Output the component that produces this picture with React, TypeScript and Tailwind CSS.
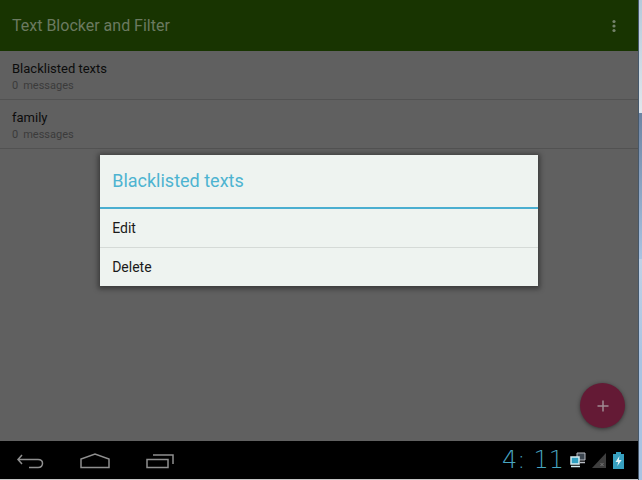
import { useState } from 'react';

interface BlockList {
  id: number;
  name: string;
  count: number;
}

const LISTS: BlockList[] = [
  { id: 1, name: 'Blacklisted texts', count: 0 },
  { id: 2, name: 'family', count: 0 },
];

const AppBar = () => (
  <header className="flex h-[51px] items-center justify-between bg-[#183401] pl-3 pr-4">
    <h1 className="text-base leading-6 text-[#6b7a60]">Text Blocker and Filter</h1>
    <button type="button" aria-label="More options" className="flex h-6 w-4 items-center justify-center">
      <svg viewBox="0 0 4 14" className="h-[14px] w-1 fill-[#74826b]">
        <circle cx="2" cy="2.5" r="1.6" />
        <circle cx="2" cy="7" r="1.6" />
        <circle cx="2" cy="11.5" r="1.6" />
      </svg>
    </button>
  </header>
);

const ListRow = ({ list }: { list: BlockList }) => (
  <li className="border-b border-[#525252] px-3 pt-2 pb-1.5">
    <div className="text-[13px] leading-5 text-[#0c0c0c]">{list.name}</div>
    <div className="flex gap-[5px] text-[11px] leading-[14px] text-[#3b3b3b]">
      <span>{list.count}</span>
      <span>messages</span>
    </div>
  </li>
);

const ContextMenu = ({ title, onClose }: { title: string; onClose: () => void }) => (
  <div className="absolute inset-0 flex items-center justify-center">
    <div
      role="dialog"
      aria-label={title}
      className="w-[68.6%] bg-[#eef3f0] shadow-[0_1px_5px_2px_rgba(0,0,0,0.4)]"
    >
      <h2 className="border-b-2 border-[#4aaed0] px-3 py-[13px] text-lg leading-[26px] text-[#4db3d1]">{title}</h2>
      <button
        type="button"
        onClick={onClose}
        className="block w-full border-b border-[#d5dad7] px-3 py-2 text-left text-sm leading-[22px] text-[#1a1a1a]"
      >
        Edit
      </button>
      <button
        type="button"
        onClick={onClose}
        className="block w-full px-3 py-2 text-left text-sm leading-[22px] text-[#1a1a1a]"
      >
        Delete
      </button>
    </div>
  </div>
);

const NavBar = () => (
  <nav className="flex h-[38px] items-center justify-between bg-black pl-4 pr-3.5">
    <div className="flex items-center gap-9 pt-1">
      <button type="button" aria-label="Back">
        <svg viewBox="0 0 28 18" className="h-[18px] w-7 fill-none stroke-[#8f8f8f] stroke-[1.5]">
          <path d="M6 2 L2 6.5 L6 11 M2 6.5 H22 C25 6.5 26.5 8 26.5 10.3 C26.5 12.8 25 14.5 22 14.5 H13" />
        </svg>
      </button>
      <button type="button" aria-label="Home">
        <svg viewBox="0 0 30 18" className="h-[18px] w-[30px] fill-none stroke-[#8f8f8f] stroke-[1.5]">
          <path d="M1 14.5 V6 L15 1 L29 6 V14.5 Z" />
        </svg>
      </button>
      <button type="button" aria-label="Recent apps">
        <svg viewBox="0 0 28 18" className="h-[18px] w-7 fill-none stroke-[#8f8f8f] stroke-[1.5]">
          <path d="M1 6.5 H22 V14.5 H1 Z M7 2 H27 V11" />
        </svg>
      </button>
    </div>
    <div className="flex items-center gap-1.5">
      <time className="flex gap-2 text-2xl leading-6 font-extralight text-[#48a5c0] [font-family:'DejaVu_Sans',sans-serif]">
        <span>4:</span>
        <span>11</span>
      </time>
      <svg viewBox="0 0 16 16" className="h-4 w-4">
        <path d="M7 1 H15 V8 H7 Z" fill="#3c4650" stroke="#b9bcc4" />
        <path d="M10 10.5 H15" stroke="#b9bcc4" strokeWidth="1.5" />
        <path d="M1 5 H9 V12 H1 Z" fill="#2f9fc0" stroke="#d5edf2" strokeWidth="1.5" />
        <path d="M1 14.5 H10" stroke="#d5edf2" strokeWidth="1.5" />
      </svg>
      <svg viewBox="0 0 15 16" className="h-4 w-[15px]">
        <path d="M14 1 V16 H0 Z" fill="#3e3e3e" />
        <path d="M8.5 11 L11.5 14 M11.5 11 L8.5 14" stroke="#777777" />
      </svg>
      <svg viewBox="0 0 11 17" className="h-[17px] w-[11px]">
        <path d="M3 0 H8 V2 H11 V17 H0 V2 H3 Z" fill="#37a0c0" />
        <path d="M6.5 4 L2.5 10 H5.2 L4.3 14 L8.7 8 H5.8 Z" fill="#e6f5f8" />
      </svg>
    </div>
  </nav>
);

const App = () => {
  const [menuFor, setMenuFor] = useState<BlockList | null>(LISTS[0]);

  return (
    <div className="flex min-h-screen [font-family:Roboto,'Liberation_Sans',sans-serif]">
      <div className="flex flex-1 flex-col border-b border-[#c8c8c8]">
        <div className="relative flex flex-1 flex-col">
          <AppBar />
          <main className="flex flex-1 flex-col justify-between bg-[#606060]">
            <ul>
              {LISTS.map((list) => (
                <ListRow key={list.id} list={list} />
              ))}
            </ul>
            <button
              type="button"
              aria-label="Add list"
              className="mr-[13px] mb-[13px] flex size-[45px] items-center justify-center self-end rounded-full bg-[#641a35] shadow-[0_1px_4px_rgba(0,0,0,0.5)]"
            >
              <svg viewBox="0 0 12 12" className="size-3 stroke-[#a08a92] stroke-[1.5]">
                <path d="M6 0.5 V11.5 M0.5 6 H11.5" />
              </svg>
            </button>
          </main>
          {menuFor && <ContextMenu title={menuFor.name} onClose={() => setMenuFor(null)} />}
        </div>
        <NavBar />
      </div>
      {/* window frame */}
      <div className="w-1 border-l border-[#46586a] bg-linear-to-b from-[#b4cadb] from-0% via-[#dfe6ec] via-23% to-[#a9c3e2] to-75%">
        <div className="mt-[113px] h-[146px] bg-linear-to-b from-[#6d84a3] to-[#a9c3e2]" />
      </div>
    </div>
  );
};

export default App;
